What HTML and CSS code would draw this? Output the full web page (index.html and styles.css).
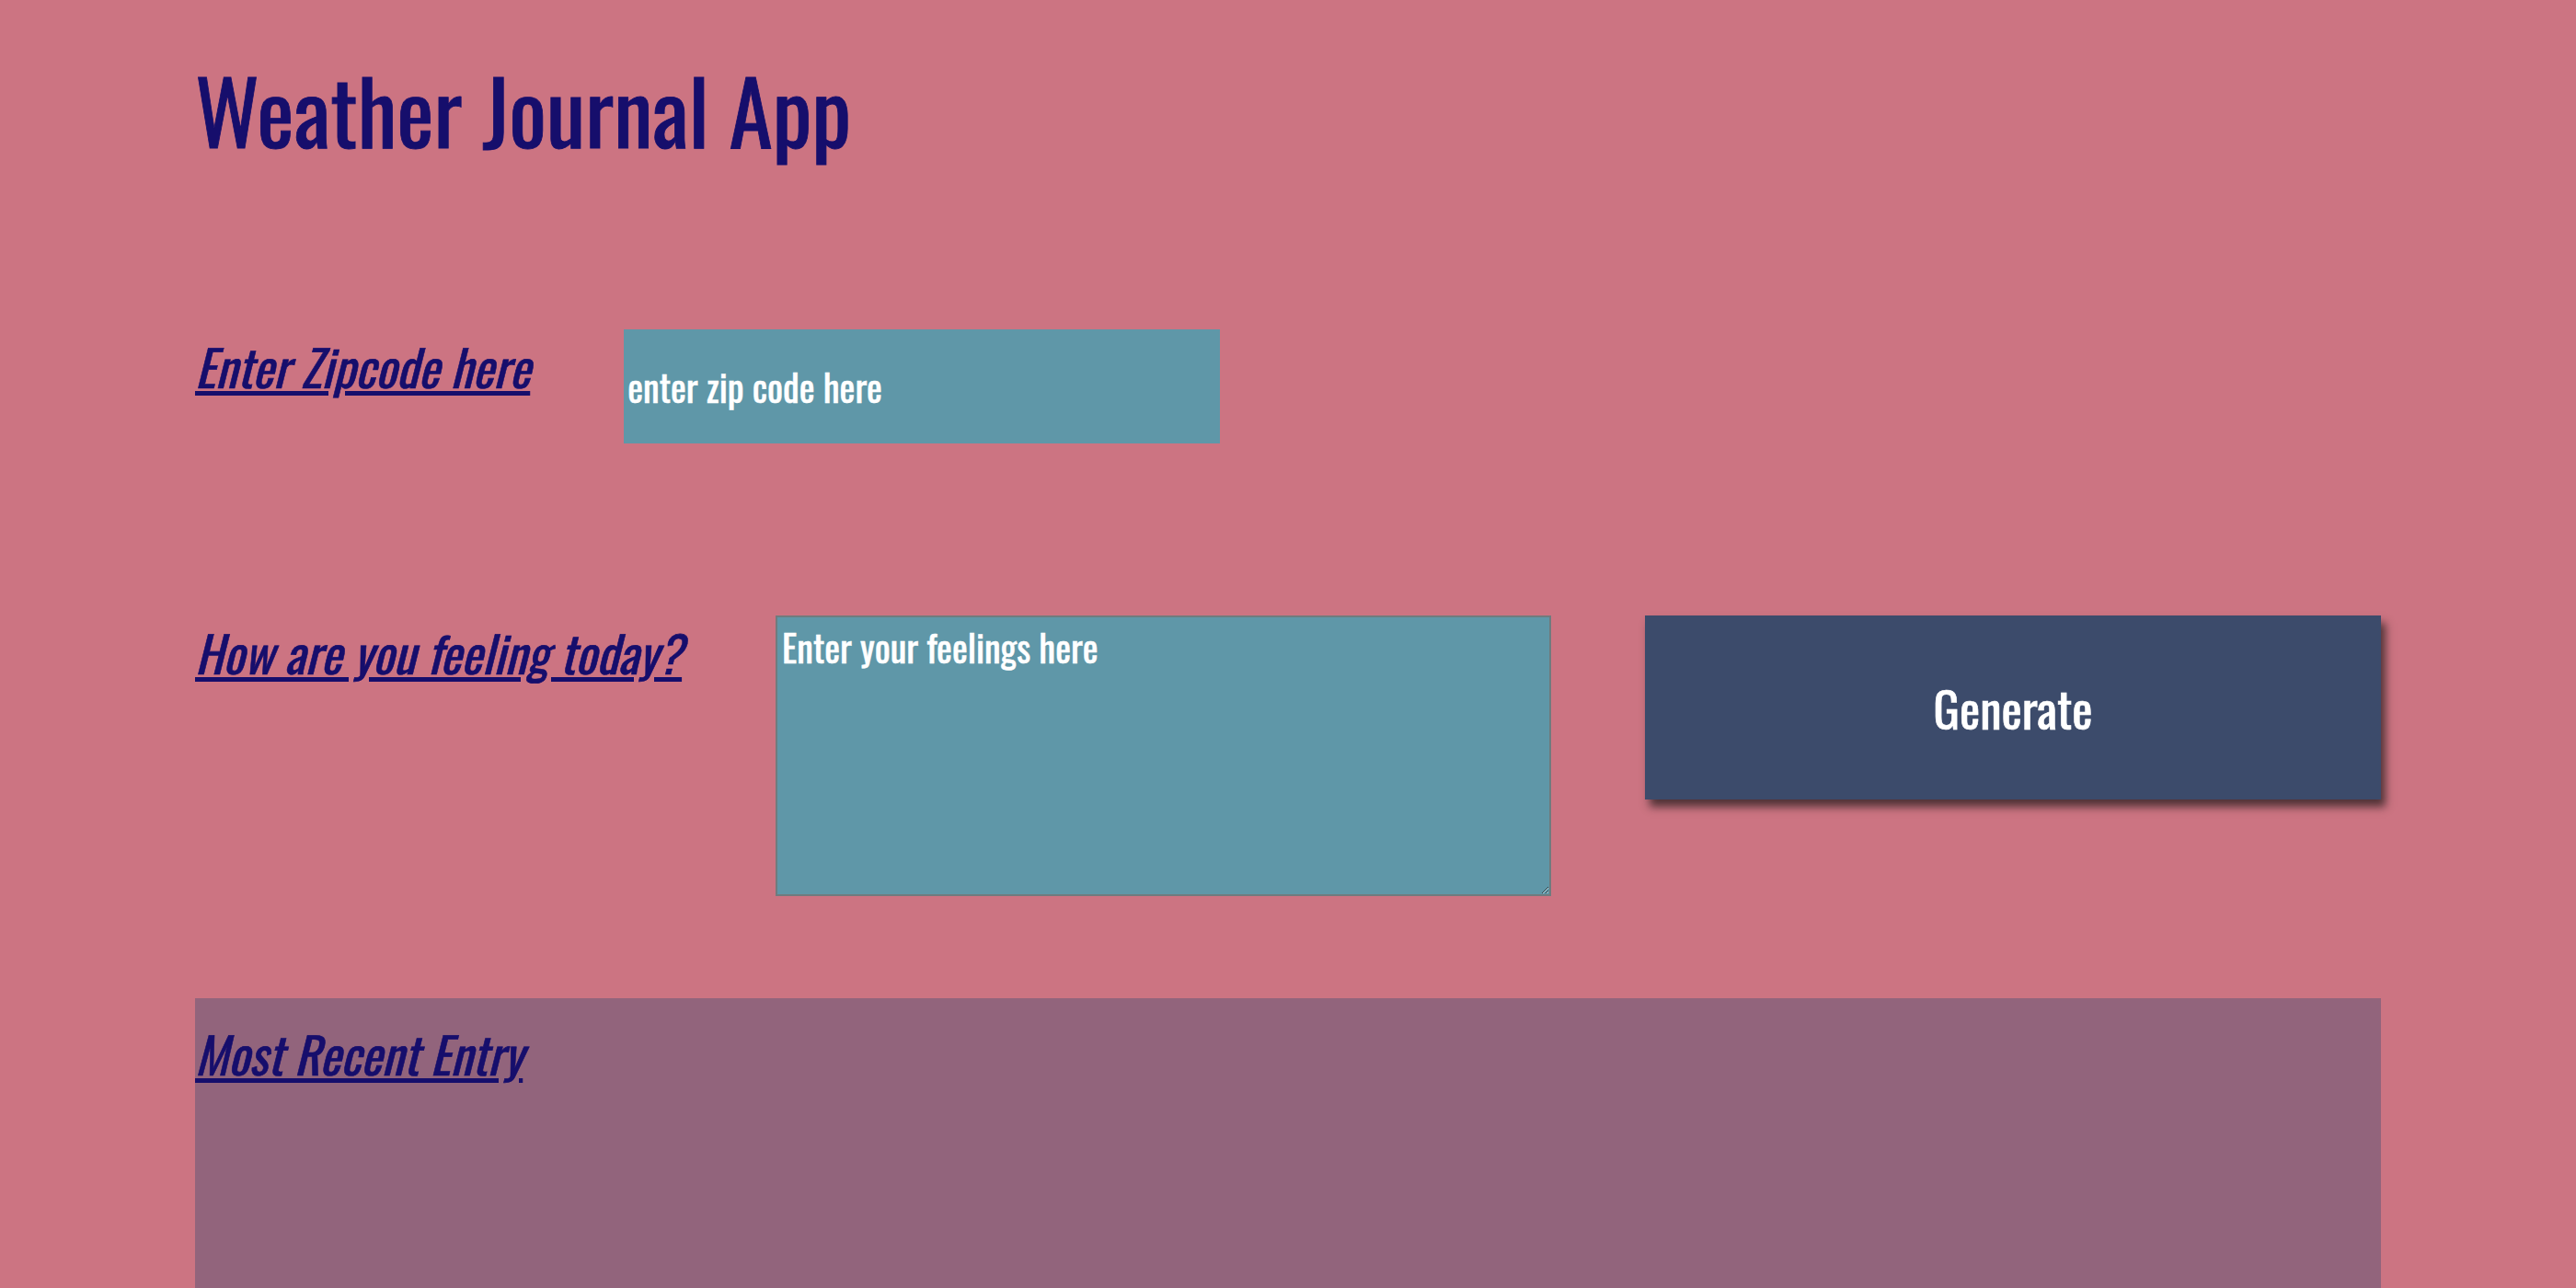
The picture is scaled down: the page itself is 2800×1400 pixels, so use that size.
FILE: index.html
```html
<!DOCTYPE html>
<html lang="en">
<head>
<meta charset="utf-8">
<title>Weather Journal App</title>
<link rel="stylesheet" href="styles.css">
</head>
<body>
<main class="app">
  <h1 class="title">Weather Journal App</h1>
  <div class="row zip-row">
    <label class="label" for="zip">Enter Zipcode here</label>
    <input class="zip" id="zip" type="text" placeholder="enter zip code here">
  </div>
  <div class="row feel-row">
    <label class="label" for="feelings">How are you feeling today?</label>
    <textarea class="feelings" id="feelings" placeholder="Enter your feelings here"></textarea>
    <button class="generate" id="generate" type="button">Generate</button>
  </div>
  <section class="entry">
    <div class="label entry-title">Most Recent Entry</div>
    <div class="entry-holder">
      <div id="date"></div>
      <div id="temp"></div>
      <div id="content"></div>
    </div>
  </section>
</main>
</body>
</html>
```
FILE: styles.css
```css
html, body {
  margin: 0;
  padding: 0;
}

body {
  background: #cc7482;
  font-family: "Oswald", "Roboto Condensed", "Liberation Sans Narrow", sans-serif;
  color: #160e6c;
  overflow: hidden;
}

.app {
  padding: 46px 212px 0;
}

.title {
  margin: 0;
  font-size: 96px;
  font-weight: 400;
  line-height: normal;
  -webkit-text-stroke: 0.8px #160e6c;
}

.row {
  display: flex;
  align-items: flex-start;
  gap: 102px;
}

.zip-row {
  margin-top: 169px;
}

.feel-row {
  margin-top: 187px;
}

.label {
  font-size: 54px;
  font-style: italic;
  text-decoration: underline;
  line-height: normal;
  white-space: nowrap;
  -webkit-text-stroke: 0.6px #160e6c;
}

.zip {
  flex-shrink: 0;
  box-sizing: border-box;
  width: 648px;
  height: 124px;
  margin: 0;
  padding: 0 4px;
  border: none;
  background: #5f97a8;
  color: #ffffff;
  font-family: inherit;
  font-size: 40px;
  outline: none;
  -webkit-text-stroke: 0.5px #ffffff;
}

.zip::placeholder,
.feelings::placeholder {
  color: #ffffff;
  opacity: 1;
}

.feelings {
  flex-shrink: 0;
  box-sizing: border-box;
  width: 843px;
  height: 305px;
  margin: 0;
  padding: 2px 5px;
  border: 2px solid #6f7b7e;
  background: #5f97a8;
  color: #ffffff;
  font-family: inherit;
  font-size: 40px;
  outline: none;
  resize: both;
  -webkit-text-stroke: 0.5px #ffffff;
}

.generate {
  flex-shrink: 0;
  box-sizing: border-box;
  width: 800px;
  height: 200px;
  margin: 0 0 0 auto;
  padding: 0;
  border: none;
  background: #3c4b6b;
  color: #ffffff;
  font-family: inherit;
  font-size: 53px;
  box-shadow: 5px 8px 9px rgba(40, 30, 30, 0.75);
  cursor: pointer;
  -webkit-text-stroke: 0.6px #ffffff;
}

.entry {
  margin-top: 111px;
  min-height: 420px;
  background: #92647c;
}

.entry-title {
  padding-top: 20px;
}
```
